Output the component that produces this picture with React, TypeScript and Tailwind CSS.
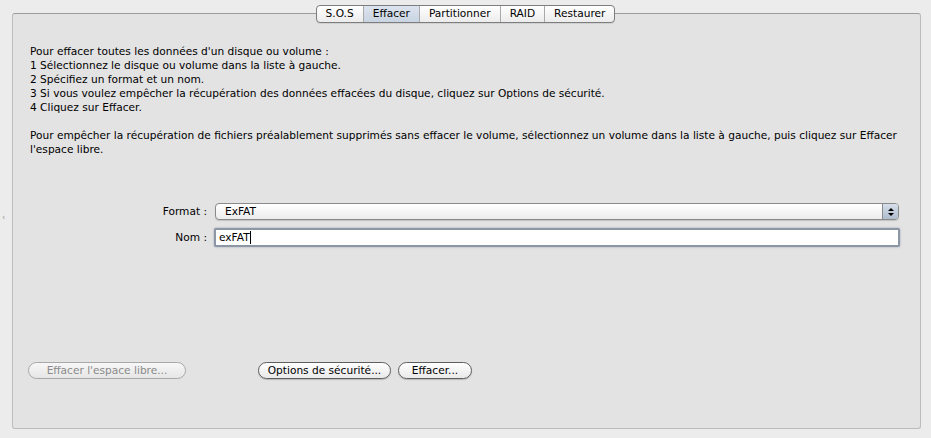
import React from "react";

const font = { fontFamily: '"DejaVu Sans", "Liberation Sans", sans-serif' };

function Tabs() {
  const tabs = ["S.O.S", "Effacer", "Partitionner", "RAID", "Restaurer"];
  return (
    <div className="absolute top-[5px] left-0 right-0 flex justify-center">
      <div className="flex h-[18px] rounded-[4px] border border-[#7d7d7d] bg-gradient-to-b from-[#ffffff] to-[#ececec] shadow-[0_1px_0_rgba(0,0,0,0.08)] overflow-hidden">
        {tabs.map((t, i) => (
          <div
            key={t}
            className={
              "flex items-center justify-center text-[10.6px] text-black px-[9px] " +
              (i > 0 ? "border-l border-[#a9a9a9] " : "") +
              (t === "Effacer" ? "bg-gradient-to-b from-[#dce4ee] to-[#c9d4e2]" : "")
            }
          >
            {t}
          </div>
        ))}
      </div>
    </div>
  );
}

export default function App() {
  return (
    <div className="relative w-[931px] h-[438px] bg-[#ececec] overflow-hidden" style={font}>
      <div className="pt-[13px] pl-[12px] pr-[10px]">
        <div className="h-[416px] rounded-[3px] border border-[#bcbcbc] border-t-[#9c9c9c] bg-[#e3e3e3] flex flex-col pl-[17px] pr-[20px] pt-[30px]">
          <div className="text-[10.6px] leading-[14px] text-black">
            <p>Pour effacer toutes les données d'un disque ou volume :</p>
            <p>1 Sélectionnez le disque ou volume dans la liste à gauche.</p>
            <p>2 Spécifiez un format et un nom.</p>
            <p>3 Si vous voulez empêcher la récupération des données effacées du disque, cliquez sur Options de sécurité.</p>
            <p>4 Cliquez sur Effacer.</p>
            <p className="mt-[14px] max-w-[880px]">
              Pour empêcher la récupération de fichiers préalablement supprimés sans effacer le volume, sélectionnez un volume dans la liste à gauche, puis cliquez sur Effacer l'espace libre.
            </p>
          </div>

          <div className="mt-[47px] flex flex-col gap-[8px] text-[10.6px]">
            <div className="flex items-center">
              <span className="w-[185px] text-right pr-[8px]">Format :</span>
              <div className="flex-1 h-[17px] mr-[1px] flex items-center rounded-[4px] border border-[#8a8a8a] bg-gradient-to-b from-[#ffffff] to-[#ececec] shadow-[0_1px_1px_rgba(0,0,0,0.15)] overflow-hidden">
                <span className="flex-1 pl-[9px]">ExFAT</span>
                <div className="w-[16px] h-full flex flex-col items-center justify-center gap-[2px] bg-gradient-to-b from-[#d6dfea] to-[#aebccd] border-l border-[#8a8a8a]">
                  <div className="w-0 h-0 border-l-[3px] border-r-[3px] border-b-[3px] border-l-transparent border-r-transparent border-b-black" />
                  <div className="w-0 h-0 border-l-[3px] border-r-[3px] border-t-[3px] border-l-transparent border-r-transparent border-t-black" />
                </div>
              </div>
            </div>
            <div className="flex items-center">
              <span className="w-[184px] text-right pr-[7px]">Nom :</span>
              <div className="flex-1 h-[19px] flex items-center rounded-[2px] border-[2px] border-[#8c96a4] bg-white shadow-[0_0_2px_rgba(90,110,140,0.6)]">
                <span className="pl-[3px]">exFAT</span>
                <span className="w-px h-[13px] bg-black" />
              </div>
            </div>
          </div>

          <div className="mt-[115px] -ml-[2px] flex items-center text-[10.6px]">
            <div className="w-[158px] h-[17px] rounded-full border border-[#a8a8a8] bg-gradient-to-b from-[#f7f7f7] to-[#e6e6e6] text-[#8a8a8a] flex items-center justify-center">
              Effacer l'espace libre...
            </div>
            <div className="ml-[72px] w-[133px] h-[17px] rounded-full border border-[#5f5f5f] bg-gradient-to-b from-[#ffffff] to-[#e9e9e9] shadow-[0_1px_1px_rgba(0,0,0,0.2)] flex items-center justify-center">
              Options de sécurité...
            </div>
            <div className="ml-[7px] w-[74px] h-[17px] rounded-full border border-[#5f5f5f] bg-gradient-to-b from-[#ffffff] to-[#e9e9e9] shadow-[0_1px_1px_rgba(0,0,0,0.2)] flex items-center justify-center">
              Effacer...
            </div>
          </div>
        </div>
      </div>
      <Tabs />
      <div className="absolute left-[2px] top-[212px] text-[8px] text-[#9a9a9a]">‹</div>
    </div>
  );
}
